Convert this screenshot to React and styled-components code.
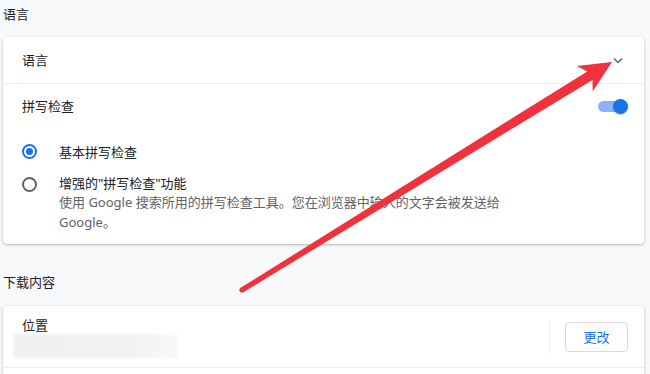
import React from "react";
import styled, { createGlobalStyle } from "styled-components";

const Global = createGlobalStyle`
  html, body { margin: 0; padding: 0; background: #f8f9fa; }
  body { font-family: "Noto Sans", "Noto Sans CJK SC", sans-serif; }
`;

const Page = styled.div`
  position: relative;
  width: 650px;
  height: 374px;
  overflow: hidden;
  box-sizing: border-box;
  padding: 0 6px 0 3px;
  background: #f8f9fa;
  color: #202124;
  font-size: 13px;
`;

const SectionTitle = styled.div`
  box-sizing: border-box;
  height: ${(p) => p.$h}px;
  padding-top: ${(p) => p.$top}px;
  line-height: 18px;
  font-size: 13px;
  color: #202124;
`;

const Card = styled.div`
  background: #fff;
  border-radius: 4px;
  box-shadow: 0 1px 2px rgba(60, 64, 67, 0.22), 0 1px 3px 1px rgba(60, 64, 67, 0.1);
  padding-bottom: ${(p) => p.$pb || 0}px;
`;

const Row = styled.div`
  box-sizing: border-box;
  height: ${(p) => p.$h}px;
  display: flex;
  align-items: center;
  justify-content: space-between;
  padding: 0 ${(p) => p.$pr}px 0 19px;
  border-bottom: ${(p) => (p.$divider ? "1px solid #eceef1" : "none")};
`;

const Label = styled.span`
  font-size: 13px;
  line-height: 18px;
  color: #202124;
`;

const Toggle = styled.div`
  position: relative;
  width: 28px;
  height: 11px;
  border-radius: 6px;
  background: #8ab4f8;
  margin-right: 2px;
`;

const Knob = styled.div`
  position: absolute;
  right: -2px;
  top: -2px;
  width: 15px;
  height: 15px;
  border-radius: 50%;
  background: #1a73e8;
  box-shadow: 0 1px 2px rgba(0, 0, 0, 0.25);
`;

const RadioGroup = styled.div`
  padding-top: 8px;
`;

const RadioRow = styled.div`
  display: flex;
  align-items: flex-start;
  padding: ${(p) => p.$pad};
`;

const RadioCircle = styled.div`
  box-sizing: border-box;
  width: 15px;
  height: 15px;
  margin: ${(p) => (p.$on ? 2 : 4)}px 22px 0 19px;
  border-radius: 50%;
  border: 2px solid ${(p) => (p.$on ? "#1a73e8" : "#5f6368")};
  display: flex;
  align-items: center;
  justify-content: center;
  flex-shrink: 0;
  &::after {
    content: "";
    display: ${(p) => (p.$on ? "block" : "none")};
    width: 7px;
    height: 7px;
    border-radius: 50%;
    background: #1a73e8;
  }
`;

const RadioText = styled.div`
  line-height: 20px;
  font-size: 13px;
`;

const Desc = styled.div`
  color: #5f6368;
  white-space: nowrap;
  line-height: 19.5px;
`;

const LocationCol = styled.div`
  display: flex;
  flex-direction: column;
  margin-left: -8px;
`;

const LocLabel = styled.span`
  padding-left: 8px;
  line-height: 18px;
  font-size: 13px;
`;

const Blur = styled.div`
  width: 164px;
  height: 24px;
  background: linear-gradient(90deg, #eeeff0, #f1f2f3 70%, #f8f8f9);
  filter: blur(1.5px);
`;

const Actions = styled.div`
  display: flex;
  align-items: center;
  height: 100%;
`;

const VSep = styled.div`
  width: 1px;
  height: 34px;
  background: #eeeff1;
  margin-right: 15px;
`;

const Button = styled.button`
  box-sizing: border-box;
  width: 63px;
  height: 30px;
  border: 1px solid #dadce0;
  border-radius: 4px;
  background: #fff;
  color: #1a73e8;
  font-family: "Noto Sans", "Noto Sans CJK SC", sans-serif;
  font-size: 13px;
  padding: 0;
`;

const Overlay = styled.svg`
  position: absolute;
  left: 0;
  top: 0;
  pointer-events: none;
`;

function Chevron() {
  return (
    <svg width="10" height="7" viewBox="0 0 10 7">
      <path d="M1 1.5 L5 5.5 L9 1.5" fill="none" stroke="#5f6368" strokeWidth="1.5" />
    </svg>
  );
}

function Arrow() {
  const tail = [242, 290];
  const tip = [612, 62];
  const dx = tip[0] - tail[0];
  const dy = tip[1] - tail[1];
  const L = Math.hypot(dx, dy);
  const ux = dx / L, uy = dy / L;
  const nx = -uy, ny = ux;
  const hl = 32, hw = 15;
  const base = [tip[0] - hl * ux, tip[1] - hl * uy];
  const joint = [tip[0] - (hl - 6) * ux, tip[1] - (hl - 6) * uy];
  const tw = 2.6, jw = 5;
  const pts = [
    [tail[0] + tw * nx, tail[1] + tw * ny],
    [joint[0] + jw * nx, joint[1] + jw * ny],
    [base[0] + hw * nx, base[1] + hw * ny],
    tip,
    [base[0] - hw * nx, base[1] - hw * ny],
    [joint[0] - jw * nx, joint[1] - jw * ny],
    [tail[0] - tw * nx, tail[1] - tw * ny],
  ];
  return (
    <Overlay width="650" height="374">
      <polygon points={pts.map((p) => p.join(",")).join(" ")} fill="#f0323c" />
      <circle cx={tail[0]} cy={tail[1]} r={tw} fill="#f0323c" />
    </Overlay>
  );
}

export default function App() {
  return (
    <>
      <Global />
      <Page>
        <SectionTitle $h={37} $top={5}>语言</SectionTitle>
        <Card $pb={12}>
          <Row $h={47} $pr={21} $divider>
            <Label>语言</Label>
            <Chevron />
          </Row>
          <Row $h={44} $pr={16}>
            <Label>拼写检查</Label>
            <Toggle><Knob /></Toggle>
          </Row>
          <RadioGroup>
            <RadioRow $pad="6px 0 6px 0">
              <RadioCircle $on />
              <RadioText>基本拼写检查</RadioText>
            </RadioRow>
            <RadioRow $pad="5px 0 0 0">
              <RadioCircle />
              <RadioText>
                增强的"拼写检查"功能
                <Desc>
                  使用 Google 搜索所用的拼写检查工具。您在浏览器中输入的文字会被发送给
                  <br />
                  Google。
                </Desc>
              </RadioText>
            </RadioRow>
          </RadioGroup>
        </Card>
        <SectionTitle $h={62} $top={29}>下载内容</SectionTitle>
        <Card>
          <Row $h={62} $pr={16} $divider>
            <LocationCol>
              <LocLabel>位置</LocLabel>
              <Blur />
            </LocationCol>
            <Actions>
              <VSep />
              <Button>更改</Button>
            </Actions>
          </Row>
          <Row $h={40} $pr={16} />
        </Card>
        <Arrow />
      </Page>
    </>
  );
}
